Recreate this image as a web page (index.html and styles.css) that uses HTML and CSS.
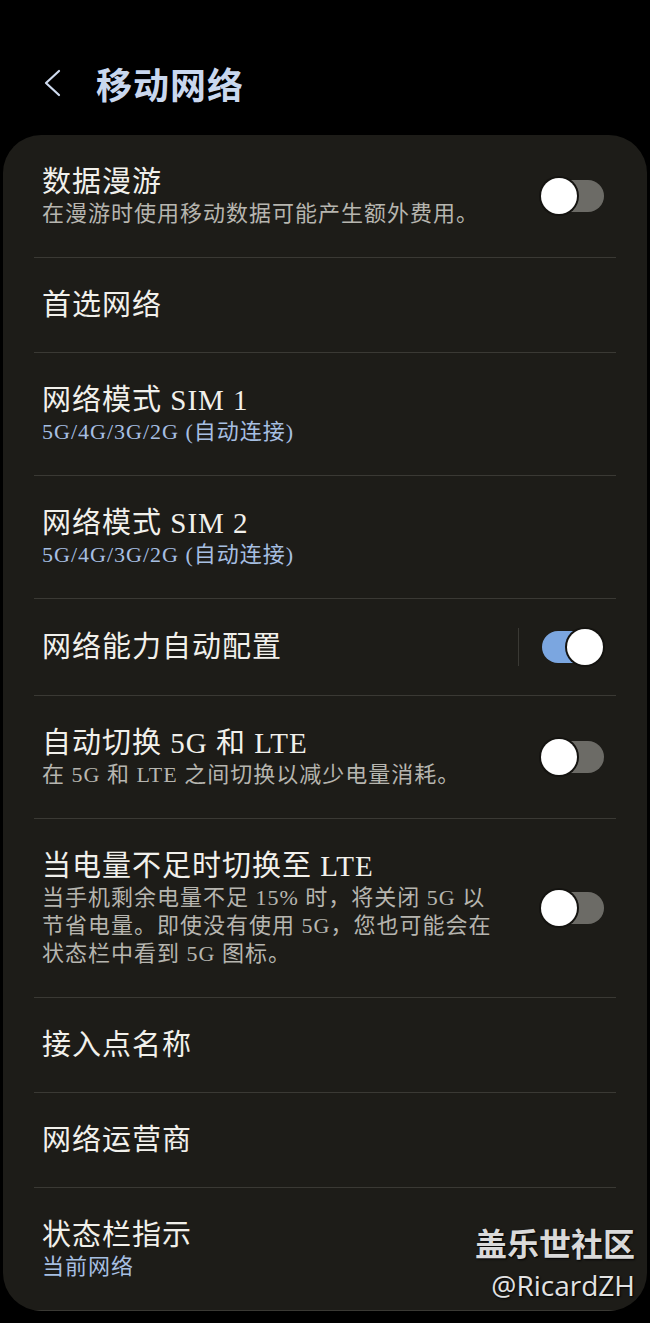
FILE: index.html
```html
<!DOCTYPE html>
<html lang="zh-CN">
<head>
    <meta charset="UTF-8">
    <meta name="viewport" content="width=device-width, initial-scale=1.0">
    <title>移动网络</title>
    <link rel="stylesheet" href="styles.css">
</head>
<body>
    <header class="top-bar">
        <svg class="back" width="20" height="28" viewBox="0 0 20 28">
            <polyline points="17,2 4,14 17,26" fill="none" stroke="#cfdbef" stroke-width="2.2" stroke-linecap="round" stroke-linejoin="round"/>
        </svg>
        <h1>移动网络</h1>
    </header>

    <div class="card">
        <div class="item">
            <div class="text">
                <div class="title">数据漫游</div>
                <div class="sub">在漫游时使用移动数据可能产生额外费用。</div>
            </div>
            <div class="switch"></div>
        </div>

        <div class="item">
            <div class="text">
                <div class="title">首选网络</div>
            </div>
        </div>

        <div class="item">
            <div class="text">
                <div class="title">网络模式 SIM 1</div>
                <div class="sub value">5G/4G/3G/2G (自动连接)</div>
            </div>
        </div>

        <div class="item">
            <div class="text">
                <div class="title">网络模式 SIM 2</div>
                <div class="sub value">5G/4G/3G/2G (自动连接)</div>
            </div>
        </div>

        <div class="item">
            <div class="text">
                <div class="title">网络能力自动配置</div>
            </div>
            <div class="vline"></div>
            <div class="switch on"></div>
        </div>

        <div class="item">
            <div class="text">
                <div class="title">自动切换 5G 和 LTE</div>
                <div class="sub">在 5G 和 LTE 之间切换以减少电量消耗。</div>
            </div>
            <div class="switch"></div>
        </div>

        <div class="item">
            <div class="text">
                <div class="title">当电量不足时切换至 LTE</div>
                <div class="sub">当手机剩余电量不足 15% 时，将关闭 5G 以<br>节省电量。即使没有使用 5G，您也可能会在<br>状态栏中看到 5G 图标。</div>
            </div>
            <div class="switch"></div>
        </div>

        <div class="item">
            <div class="text">
                <div class="title">接入点名称</div>
            </div>
        </div>

        <div class="item">
            <div class="text">
                <div class="title">网络运营商</div>
            </div>
        </div>

        <div class="item">
            <div class="text">
                <div class="title">状态栏指示</div>
                <div class="sub value">当前网络</div>
            </div>
        </div>

        <div class="watermark">
            <div class="wm-name">盖乐世社区</div>
            <div class="wm-user">@RicardZH</div>
        </div>
    </div>
</body>
</html>
```

FILE: styles.css
```css
body {
    margin: 0;
    background-color: #000;
    font-family: "Liberation Serif", "Noto Sans CJK SC", serif;
}

.top-bar {
    display: flex;
    align-items: center;
    height: 36px;
    margin: 65px 0 34px;
    padding-left: 42px;
}

.back {
    display: block;
    margin-right: 34px;
}

h1 {
    margin: 0;
    font-family: "Noto Sans CJK SC", sans-serif;
    font-size: 36px;
    line-height: 36px;
    font-weight: bold;
    letter-spacing: 1px;
    color: #c9d7ee;
}

.card {
    position: relative;
    margin: 0 3px;
    background-color: #1d1c18;
    border-radius: 38px;
    overflow: hidden;
}

.item {
    display: flex;
    align-items: center;
    margin: 0 31px;
    padding: 29px 12px 29px 8px;
    border-bottom: 1px solid #3a3934;
}

.item:last-of-type {
    border-bottom: none;
}

.text {
    flex: 1;
    min-width: 0;
    display: flex;
    flex-direction: column;
    align-items: flex-start;
}

.title {
    font-size: 29px;
    line-height: 36px;
    letter-spacing: 1px;
    color: #f1f0eb;
}

.sub {
    font-size: 22px;
    line-height: 28px;
    letter-spacing: 1px;
    color: #b6b5af;
}

.sub.value {
    color: #a6bfe2;
}

.vline {
    width: 1px;
    height: 38px;
    margin-right: 22px;
    background-color: #3a3934;
}

.switch {
    position: relative;
    flex-shrink: 0;
    width: 63px;
    height: 36px;
}

.switch::before {
    content: "";
    position: absolute;
    left: 4px;
    right: 0;
    top: 2px;
    height: 32px;
    border-radius: 16px;
    background-color: #6c6b66;
}

.switch::after {
    content: "";
    position: absolute;
    left: 0;
    top: 0;
    width: 36px;
    height: 36px;
    border-radius: 50%;
    background-color: #fff;
    box-shadow: 0 0 0 2px #141310;
}

.switch.on::before {
    left: 1px;
    right: 8px;
    background-color: #7ba6e0;
}

.switch.on::after {
    left: 26px;
}

.watermark {
    position: absolute;
    right: 12px;
    bottom: 8px;
    display: flex;
    flex-direction: column;
    align-items: flex-end;
    gap: 8px;
    text-shadow: 1px 1px 2px #000;
}

.wm-name {
    font-family: "Noto Sans CJK SC", sans-serif;
    font-size: 32px;
    line-height: 34px;
    font-weight: bold;
    color: #d9d9d9;
}

.wm-user {
    font-family: "Open Sans", sans-serif;
    font-size: 28px;
    line-height: 36px;
    color: #e2e2e2;
}
```
